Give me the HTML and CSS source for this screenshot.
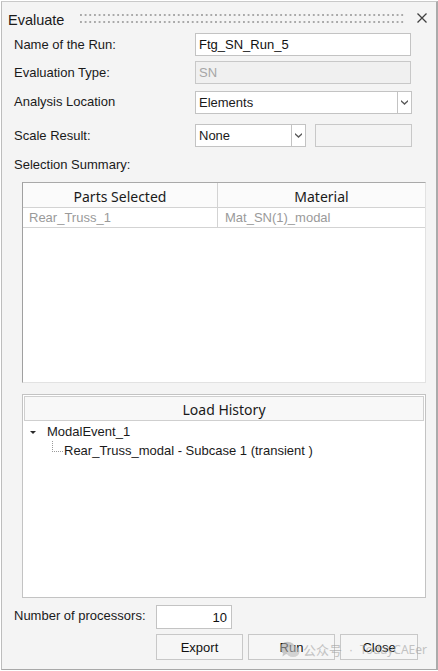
FILE: index.html
```html
<!DOCTYPE html>
<html>
<head>
<meta charset="utf-8">
<link rel="stylesheet" href="styles.css">
</head>
<body>
<div class="window">
  <div class="titlebar">
    <span class="title">Evaluate</span>
    <div class="grip"></div>
    <svg class="close" width="10" height="10" viewBox="0 0 10 10"><path d="M0.5 0.5 L9.5 9.5 M9.5 0.5 L0.5 9.5" stroke="#404040" stroke-width="1.3" fill="none"/></svg>
  </div>

  <div class="row r1">
    <span class="label">Name of the Run:</span>
    <div class="input">Ftg_SN_Run_5</div>
  </div>
  <div class="row r2">
    <span class="label">Evaluation Type:</span>
    <div class="input disabled">SN</div>
  </div>
  <div class="row r3">
    <span class="label">Analysis Location</span>
    <div class="select wide">
      <span class="sel-text">Elements</span>
      <span class="sel-btn"><svg width="7" height="5" viewBox="0 0 7 5"><path d="M0 0 L3.5 3 L7 0 L7 1.8 L3.5 5 L0 1.8Z" fill="#5a5a5a"/></svg></span>
    </div>
  </div>
  <div class="row r4">
    <span class="label">Scale Result:</span>
    <div class="select narrow">
      <span class="sel-text">None</span>
      <span class="sel-btn"><svg width="7" height="5" viewBox="0 0 7 5"><path d="M0 0 L3.5 3 L7 0 L7 1.8 L3.5 5 L0 1.8Z" fill="#5a5a5a"/></svg></span>
    </div>
    <div class="input empty"></div>
  </div>
  <div class="section-label">Selection Summary:</div>

  <div class="table1">
    <div class="thead">
      <div class="th">Parts Selected</div>
      <div class="th last">Material</div>
    </div>
    <div class="trow">
      <div class="td">Rear_Truss_1</div>
      <div class="td last">Mat_SN(1)_modal</div>
    </div>
  </div>

  <div class="table2">
    <div class="th2">Load History</div>
    <div class="tree">
      <div class="node"><span class="caret"></span><span class="node-text">ModalEvent_1</span></div>
      <div class="node child"><span class="connector"></span><span class="node-text">Rear_Truss_modal - Subcase 1 (transient )</span></div>
    </div>
  </div>

  <div class="row nrow">
    <span class="nlabel">Number of processors:</span>
    <div class="input num">10</div>
  </div>
  <div class="buttons">
    <div class="btn">Export</div>
    <div class="btn">Run</div>
    <div class="btn close-btn">Close</div>
  </div>

  <div class="watermark">
    <svg width="20" height="17" viewBox="0 0 20 17"><ellipse cx="7.5" cy="7" rx="7.5" ry="6.3" fill="#a8a8a8"/><ellipse cx="13" cy="10.5" rx="6.5" ry="5.5" fill="#bdbdbd"/><path d="M3 12 L2.5 15.5 L6 13Z" fill="#a8a8a8"/></svg>
    <span class="wm-cjk">公众号</span>
    <span class="wm-dot">·</span>
    <span class="wm-lat">TodayCAEer</span>
  </div>
</div>
</body>
</html>
```

FILE: styles.css
```css
* { box-sizing: border-box; }
html, body { margin: 0; padding: 0; background: #ffffff; }
body {
  font-family: "Liberation Sans", Arial, sans-serif;
  font-size: 13px;
  color: #1a1a1a;
}
.window {
  position: relative;
  margin: 1px 0 0 1px;
  width: 437px;
  height: 669px;
  background: #f4f4f4;
  border-top: 1px solid #c9c9c9;
  border-left: 1px solid #bdbdbd;
  border-right: 2px solid #ababab;
  border-bottom: 1px solid #a8a8a8;
  overflow: hidden;
}
.titlebar {
  height: 29px;
  display: flex;
  align-items: center;
  padding-left: 6px;
  padding-top: 6px;
}
.title {
  font-size: 14.5px;
  color: #1a1a1a;
  width: 72px;
}
.grip {
  width: 325px;
  height: 9px;
  margin-top: -2px;
  background-image: linear-gradient(to right, #a9a9a9 0, #a9a9a9 1.7px, transparent 1.7px);
  background-size: 4.67px 2px;
  background-repeat: repeat-x;
  background-position: 0 0;
  position: relative;
}
.grip::after {
  content: "";
  position: absolute;
  left: 0; right: 0; top: 7px; height: 2px;
  background-image: linear-gradient(to right, #a9a9a9 0, #a9a9a9 1.7px, transparent 1.7px);
  background-size: 4.67px 2px;
  background-repeat: repeat-x;
}
.close {
  margin-left: 12px;
  margin-top: -3px;
}
.row {
  display: flex;
  align-items: center;
  padding-left: 12px;
}
.label {
  width: 181px;
  flex: none;
}
.input {
  width: 216px;
  height: 23px;
  background: #ffffff;
  border: 1px solid #c3c3c3;
  padding-left: 3px;
  display: flex;
  align-items: center;
  font-size: 13px;
  color: #111;
}
.input.disabled {
  background: #f0f0f0;
  border-color: #c8c8c8;
  color: #a6a6a6;
}
.r1 { margin-top: 2px; }
.r2 { margin-top: 5px; }
.r3 { margin-top: 7px; }
.r4 { margin-top: 10px; }
.r3 .label { margin-top: -2px; }
.select {
  height: 23px;
  background: #ffffff;
  border: 1px solid #c3c3c3;
  display: flex;
}
.select.wide { width: 217px; }
.select.narrow { width: 111px; }
.sel-text {
  flex: 1;
  padding-left: 3px;
  display: flex;
  align-items: center;
}
.sel-btn {
  width: 14px;
  border-left: 1px solid #c3c3c3;
  display: flex;
  align-items: center;
  justify-content: center;
}
.input.empty {
  width: 97px;
  margin-left: 9px;
  background: #f4f4f4;
  border-color: #c8c8c8;
}
.section-label {
  margin-top: 8px;
  height: 20px;
  line-height: 20px;
  padding-left: 12px;
}
.table1 {
  margin: 7px 0 0 20px;
  width: 404px;
  height: 201px;
  background: #ffffff;
  border-top: 1px solid #a9a9a9;
  border-left: 1px solid #a0a0a0;
  border-right: 1px solid #e2e2e2;
  border-bottom: 1px solid #e2e2e2;
}
.thead, .trow {
  display: grid;
  grid-template-columns: 195px 1fr;
}
.th {
  height: 25px;
  border-right: 1px solid #d3d3d3;
  border-bottom: 1px solid #d3d3d3;
  background: #fbfbfb;
  font-family: "Noto Sans", "Liberation Sans", sans-serif;
  font-size: 14px;
  color: #1a1a1a;
  display: flex;
  align-items: center;
  justify-content: center;
  padding-top: 2px;
}
.th.last, .td.last { border-right: none; }
.td {
  height: 20px;
  border-right: 1px solid #d3d3d3;
  border-bottom: 1px solid #d3d3d3;
  color: #9a9a9a;
  padding-left: 6px;
  display: flex;
  align-items: center;
}
.td.last { padding-left: 7px; border-right: none; }
.table2 {
  margin: 11px 0 0 20px;
  width: 404px;
  height: 204px;
  background: #ffffff;
  border: 1px solid #c3c3c3;
  padding: 1px;
}
.th2 {
  height: 25px;
  border: 1px solid #cfcfcf;
  background: #f8f8f8;
  font-family: "Noto Sans", "Liberation Sans", sans-serif;
  font-size: 14px;
  color: #1a1a1a;
  display: flex;
  align-items: center;
  justify-content: center;
  padding-top: 2px;
}
.tree { padding-top: 1px; }
.node {
  height: 19px;
  display: flex;
  align-items: center;
  position: relative;
}
.caret {
  width: 0; height: 0;
  border-left: 3px solid transparent;
  border-right: 3px solid transparent;
  border-top: 3px solid #2a2a2a;
  margin-left: 6px;
  margin-right: 11px;
  margin-top: 1px;
}
.child .node-text { margin-left: 40px; }
.connector {
  position: absolute;
  left: 28px;
  top: 0;
  width: 11px;
  height: 11px;
  border-left: 1px dotted #9a9a9a;
  border-bottom: 1px dotted #9a9a9a;
}
.nrow { margin-top: 7px; }
.nlabel { width: 142px; flex: none; margin-top: -3px; }
.input.num {
  width: 76px;
  height: 24px;
  justify-content: flex-end;
  padding-right: 4px;
  padding-left: 0;
}
.buttons {
  margin-top: 5px;
  display: flex;
  gap: 5px;
  padding-left: 154px;
}
.btn {
  width: 87px;
  height: 26px;
  border: 1px solid #c8c8c8;
  background: #f6f6f6;
  display: flex;
  align-items: center;
  justify-content: center;
  color: #111;
}
.btn.close-btn { width: 78px; }
.watermark {
  position: absolute;
  left: 278px;
  top: 638px;
  display: flex;
  align-items: center;
  gap: 3px;
  color: #a0a0a0;
  opacity: 0.6;
  pointer-events: none;
}
.wm-cjk {
  font-family: "Noto Sans CJK SC", sans-serif;
  font-size: 13px;
}
.wm-dot { font-size: 12px; margin: 0 4px; }
.wm-lat {
  font-family: "Noto Sans", sans-serif;
  font-size: 12px;
}
```
